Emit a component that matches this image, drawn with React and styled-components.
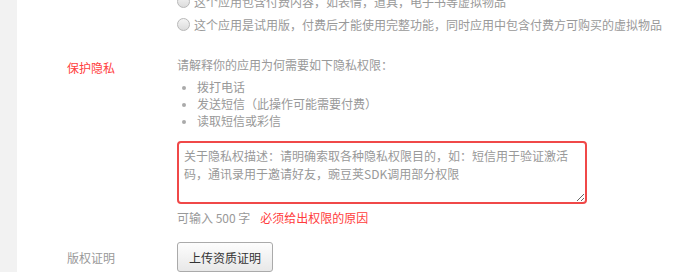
import React from "react";
import styled, { createGlobalStyle } from "styled-components";

const GlobalStyle = createGlobalStyle`
  html, body {
    margin: 0;
    padding: 0;
    background: #fff;
    overflow: hidden;
  }
  body {
    font-family: "Noto Sans CJK SC", "Liberation Sans", sans-serif;
    font-size: 12px;
    color: #999;
  }
`;

const Page = styled.div`
  display: flex;
  height: 272px;
  overflow: hidden;
`;

const SideStrip = styled.div`
  width: 17px;
  flex-shrink: 0;
  background: #f2f2f2;
`;

const Main = styled.div`
  flex: 1;
  background: #fff;
`;

// the form is scrolled a little, the first radio line is cut at the top
const Form = styled.div`
  margin-top: -10px;
`;

const FormRow = styled.div`
  display: grid;
  grid-template-columns: 160px 1fr;
  margin-bottom: ${p => p.gap || 0}px;
`;

const RowLabel = styled.div`
  padding-left: 50px;
  padding-top: ${p => p.offset || 0}px;
  line-height: 17px;
  color: ${p => (p.required ? "#ff4040" : "#999")};
`;

const RowBody = styled.div`
  display: flex;
  flex-direction: column;
`;

const RadioLine = styled.label`
  display: flex;
  align-items: center;
  height: 23px;
  color: #999;
`;

const Radio = styled.span`
  width: 11px;
  height: 11px;
  border-radius: 50%;
  border: 1px solid #b8b8b8;
  background: linear-gradient(#f4f4f4, #dcdcdc);
  margin-right: 4px;
  flex-shrink: 0;
`;

const Intro = styled.div`
  line-height: 17px;
`;

const PermList = styled.ul`
  margin: 5px 0 0;
  padding: 0 0 0 20px;
  list-style: disc;
  line-height: 17px;

  li::marker {
    color: #aaa;
    font-size: 10px;
  }
`;

const Describe = styled.textarea`
  box-sizing: border-box;
  width: 410px;
  height: 63px;
  margin-top: 12px;
  padding: 4px 3px 4px 5px;
  border: 2px solid #f04848;
  border-radius: 4px;
  font-family: inherit;
  font-size: 12px;
  line-height: 18px;
  color: #666;
  resize: vertical;
  outline: none;

  &::placeholder {
    color: #999;
  }
`;

const Hint = styled.div`
  margin-top: 5px;
  line-height: 17px;
  display: flex;
  gap: 10px;
`;

const ErrorText = styled.span`
  color: #ff3c3c;
`;

const UploadButton = styled.button`
  align-self: flex-start;
  height: 30px;
  padding: 0 11px;
  border: 1px solid #aaa;
  border-radius: 3px;
  background: linear-gradient(#fdfdfd, #e8e8e8);
  font-family: inherit;
  font-size: 12px;
  color: #333;
  cursor: pointer;
`;

export default function App() {
  return (
    <Page>
      <GlobalStyle />
      <SideStrip />
      <Main>
        <Form>
          <FormRow gap={20}>
            <RowLabel />
            <RowBody>
              <RadioLine>
                <Radio />
                这个应用包含付费内容，如表情，道具，电子书等虚拟物品
              </RadioLine>
              <RadioLine>
                <Radio />
                这个应用是试用版，付费后才能使用完整功能，同时应用中包含付费方可购买的虚拟物品
              </RadioLine>
            </RowBody>
          </FormRow>

          <FormRow gap={16}>
            <RowLabel required offset={3}>保护隐私</RowLabel>
            <RowBody>
              <Intro>请解释你的应用为何需要如下隐私权限：</Intro>
              <PermList>
                <li>拨打电话</li>
                <li>发送短信（此操作可能需要付费）</li>
                <li>读取短信或彩信</li>
              </PermList>
              <Describe placeholder="关于隐私权描述：请明确索取各种隐私权限目的，如：短信用于验证激活码，通讯录用于邀请好友，豌豆荚SDK调用部分权限" />
              <Hint>
                <span>可输入 500 字</span>
                <ErrorText>必须给出权限的原因</ErrorText>
              </Hint>
            </RowBody>
          </FormRow>

          <FormRow>
            <RowLabel offset={7}>版权证明</RowLabel>
            <RowBody>
              <UploadButton>上传资质证明</UploadButton>
            </RowBody>
          </FormRow>
        </Form>
      </Main>
    </Page>
  );
}
